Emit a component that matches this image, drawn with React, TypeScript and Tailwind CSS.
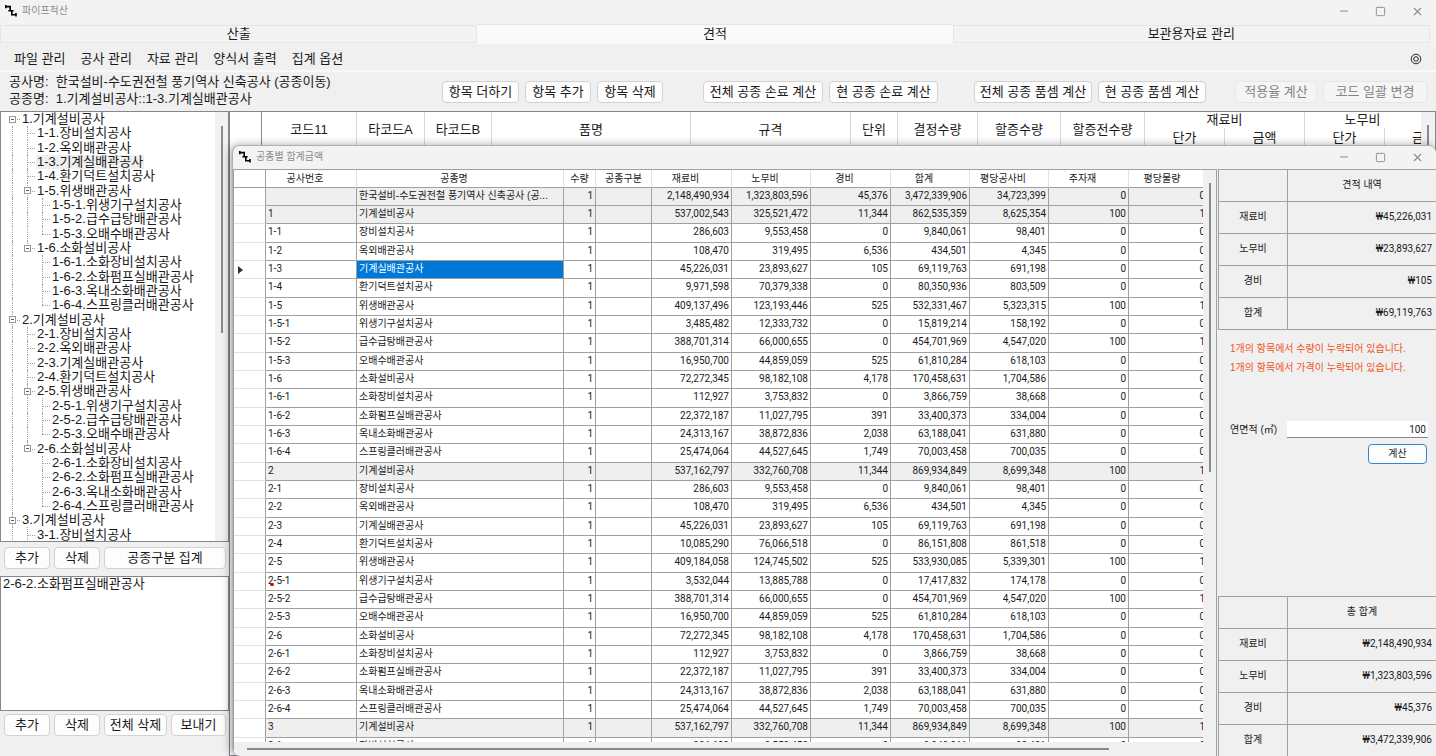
import { Minus, Square, X } from 'lucide-react';

type TreeItem = { level: number; label: string };

const tree: TreeItem[] = [
  { level: 0, label: '1.기계설비공사' },
  { level: 1, label: '1-1.장비설치공사' },
  { level: 1, label: '1-2.옥외배관공사' },
  { level: 1, label: '1-3.기계실배관공사' },
  { level: 1, label: '1-4.환기덕트설치공사' },
  { level: 1, label: '1-5.위생배관공사' },
  { level: 2, label: '1-5-1.위생기구설치공사' },
  { level: 2, label: '1-5-2.급수급탕배관공사' },
  { level: 2, label: '1-5-3.오배수배관공사' },
  { level: 1, label: '1-6.소화설비공사' },
  { level: 2, label: '1-6-1.소화장비설치공사' },
  { level: 2, label: '1-6-2.소화펌프실배관공사' },
  { level: 2, label: '1-6-3.옥내소화배관공사' },
  { level: 2, label: '1-6-4.스프링클러배관공사' },
  { level: 0, label: '2.기계설비공사' },
  { level: 1, label: '2-1.장비설치공사' },
  { level: 1, label: '2-2.옥외배관공사' },
  { level: 1, label: '2-3.기계실배관공사' },
  { level: 1, label: '2-4.환기덕트설치공사' },
  { level: 1, label: '2-5.위생배관공사' },
  { level: 2, label: '2-5-1.위생기구설치공사' },
  { level: 2, label: '2-5-2.급수급탕배관공사' },
  { level: 2, label: '2-5-3.오배수배관공사' },
  { level: 1, label: '2-6.소화설비공사' },
  { level: 2, label: '2-6-1.소화장비설치공사' },
  { level: 2, label: '2-6-2.소화펌프실배관공사' },
  { level: 2, label: '2-6-3.옥내소화배관공사' },
  { level: 2, label: '2-6-4.스프링클러배관공사' },
  { level: 0, label: '3.기계설비공사' },
  { level: 1, label: '3-1.장비설치공사' },
];

// code, name, material, labor, expense, total, per-pyeong cost, main material, per-pyeong volume
const rows: string[][] = [
  ['', '한국설비-수도권전철 풍기역사 신축공사 (공...', '2,148,490,934', '1,323,803,596', '45,376', '3,472,339,906', '34,723,399', '0', '0'],
  ['1', '기계설비공사', '537,002,543', '325,521,472', '11,344', '862,535,359', '8,625,354', '100', '1'],
  ['1-1', '장비설치공사', '286,603', '9,553,458', '0', '9,840,061', '98,401', '0', '0'],
  ['1-2', '옥외배관공사', '108,470', '319,495', '6,536', '434,501', '4,345', '0', '0'],
  ['1-3', '기계실배관공사', '45,226,031', '23,893,627', '105', '69,119,763', '691,198', '0', '0'],
  ['1-4', '환기덕트설치공사', '9,971,598', '70,379,338', '0', '80,350,936', '803,509', '0', '0'],
  ['1-5', '위생배관공사', '409,137,496', '123,193,446', '525', '532,331,467', '5,323,315', '100', '1'],
  ['1-5-1', '위생기구설치공사', '3,485,482', '12,333,732', '0', '15,819,214', '158,192', '0', '0'],
  ['1-5-2', '급수급탕배관공사', '388,701,314', '66,000,655', '0', '454,701,969', '4,547,020', '100', '1'],
  ['1-5-3', '오배수배관공사', '16,950,700', '44,859,059', '525', '61,810,284', '618,103', '0', '0'],
  ['1-6', '소화설비공사', '72,272,345', '98,182,108', '4,178', '170,458,631', '1,704,586', '0', '0'],
  ['1-6-1', '소화장비설치공사', '112,927', '3,753,832', '0', '3,866,759', '38,668', '0', '0'],
  ['1-6-2', '소화펌프실배관공사', '22,372,187', '11,027,795', '391', '33,400,373', '334,004', '0', '0'],
  ['1-6-3', '옥내소화배관공사', '24,313,167', '38,872,836', '2,038', '63,188,041', '631,880', '0', '0'],
  ['1-6-4', '스프링클러배관공사', '25,474,064', '44,527,645', '1,749', '70,003,458', '700,035', '0', '0'],
  ['2', '기계설비공사', '537,162,797', '332,760,708', '11,344', '869,934,849', '8,699,348', '100', '1'],
  ['2-1', '장비설치공사', '286,603', '9,553,458', '0', '9,840,061', '98,401', '0', '0'],
  ['2-2', '옥외배관공사', '108,470', '319,495', '6,536', '434,501', '4,345', '0', '0'],
  ['2-3', '기계실배관공사', '45,226,031', '23,893,627', '105', '69,119,763', '691,198', '0', '0'],
  ['2-4', '환기덕트설치공사', '10,085,290', '76,066,518', '0', '86,151,808', '861,518', '0', '0'],
  ['2-5', '위생배관공사', '409,184,058', '124,745,502', '525', '533,930,085', '5,339,301', '100', '1'],
  ['2-5-1', '위생기구설치공사', '3,532,044', '13,885,788', '0', '17,417,832', '174,178', '0', '0'],
  ['2-5-2', '급수급탕배관공사', '388,701,314', '66,000,655', '0', '454,701,969', '4,547,020', '100', '1'],
  ['2-5-3', '오배수배관공사', '16,950,700', '44,859,059', '525', '61,810,284', '618,103', '0', '0'],
  ['2-6', '소화설비공사', '72,272,345', '98,182,108', '4,178', '170,458,631', '1,704,586', '0', '0'],
  ['2-6-1', '소화장비설치공사', '112,927', '3,753,832', '0', '3,866,759', '38,668', '0', '0'],
  ['2-6-2', '소화펌프실배관공사', '22,372,187', '11,027,795', '391', '33,400,373', '334,004', '0', '0'],
  ['2-6-3', '옥내소화배관공사', '24,313,167', '38,872,836', '2,038', '63,188,041', '631,880', '0', '0'],
  ['2-6-4', '스프링클러배관공사', '25,474,064', '44,527,645', '1,749', '70,003,458', '700,035', '0', '0'],
  ['3', '기계설비공사', '537,162,797', '332,760,708', '11,344', '869,934,849', '8,699,348', '100', '1'],
  ['3-1', '장비설치공사', '286,603', '9,553,458', '0', '9,840,061', '98,401', '0', '0'],
];

const estimate = [
  ['재료비', '₩45,226,031'],
  ['노무비', '₩23,893,627'],
  ['경비', '₩105'],
  ['합계', '₩69,119,763'],
];

const grandTotal = [
  ['재료비', '₩2,148,490,934'],
  ['노무비', '₩1,323,803,596'],
  ['경비', '₩45,376'],
  ['합계', '₩3,472,339,906'],
];

const korean = "font-['Liberation_Sans','Noto_Sans_CJK_KR',sans-serif]";
const numeric = "font-['Roboto','Noto_Sans_CJK_KR',sans-serif]";

function Logo() {
  return (
    <svg className="w-3 h-3 shrink-0" viewBox="0 0 12 12" fill="none" stroke="#000" strokeWidth="1.6">
      <path d="M.8 0v3.2M.8 1.6h4.4V6M3.4 5.8h5.2M6.8 5.8v4h4M11 8v3.6" />
    </svg>
  );
}

function WindowBar({ title, className }: { title: string; className: string }) {
  return (
    <header className={`flex items-center shrink-0 bg-[#f3f3f3] text-[10px] leading-4 text-[#8c8c8c] ${className}`}>
      <Logo />
      <span className="ml-[5px]">{title}</span>
      <div className="ml-auto flex items-center gap-[25px] text-[#8a8a8a]">
        <button type="button" aria-label="최소화"><Minus size={12} strokeWidth={2} /></button>
        <button type="button" aria-label="최대화"><Square size={11} strokeWidth={2} /></button>
        <button type="button" aria-label="닫기"><X size={13} strokeWidth={2} /></button>
      </div>
    </header>
  );
}

function PushButton({ label, className, disabled }: { label: string; className: string; disabled?: boolean }) {
  return (
    <button
      type="button"
      disabled={disabled}
      className={`h-[22px] shrink-0 rounded-[4px] border border-[#d2d2d2] bg-[#fdfdfd] text-[13px] leading-4 whitespace-nowrap disabled:border-[#e6e6e6] disabled:bg-[#f5f5f5] disabled:text-[#838383] ${className}`}
    >
      {label}
    </button>
  );
}

// whether the guide line of `level` goes on below row `index`
function continues(index: number, level: number) {
  for (const item of tree.slice(index + 1)) {
    if (item.level === level) return true;
    if (item.level < level) return false;
  }
  return level < 2;
}

function TreeRow({ item, index }: { item: TreeItem; index: number }) {
  const expandable = tree[index + 1]?.level > item.level;
  const selected = index === 3;
  return (
    <li className="flex h-[14px] nth-[3n]:h-[15px] items-center text-[13px] leading-[14px] whitespace-nowrap">
      {Array.from({ length: item.level + 1 }, (_, level) => {
        const own = level === item.level;
        const below = continues(index, level);
        return (
          <span key={level} className="relative w-[15px] self-stretch shrink-0 flex items-center">
            {(below || own) && !(own && index === 0) && (
              <span className={`absolute left-[7px] top-0 border-l border-dotted border-[#a0a0a0] ${below ? 'bottom-0' : 'bottom-1/2'}`} />
            )}
            {own && <span className="absolute left-[7px] right-0 top-1/2 border-t border-dotted border-[#a0a0a0]" />}
            {own && expandable && (
              <button type="button" aria-label="접기" className="relative ml-1 flex w-[7px] h-[7px] items-center justify-center border border-[#999] bg-white">
                <span className="w-[3px] h-px bg-[#3b5fa8]" />
              </button>
            )}
          </span>
        );
      })}
      <span className={`ml-px px-px ${selected ? 'bg-[#efefef]' : ''}`}>{item.label}</span>
    </li>
  );
}

function Sidebar() {
  return (
    <aside className="flex w-[229px] shrink-0 flex-col">
      <div className="flex h-[431px] overflow-hidden border border-[#828790] bg-white">
        <ul className="flex-1 overflow-hidden pl-1">
          {tree.map((item, index) => (
            <TreeRow key={item.label} item={item} index={index} />
          ))}
        </ul>
        <div className="w-[13px] bg-[#f1f1f1] pt-[14px]">
          <div className="mx-auto h-[207px] w-[2px] bg-[#8a8a8a]" />
        </div>
      </div>
      <div className="flex gap-1 px-1 py-[5px]">
        <PushButton label="추가" className="w-[46px]" />
        <PushButton label="삭제" className="w-[46px]" />
        <PushButton label="공종구분 집계" className="w-[122px]" />
      </div>
      <ul className="mt-[2px] h-[135px] border border-[#828790] bg-white px-[2px] text-[13px] leading-[14px]">
        <li>2-6-2.소화펌프실배관공사</li>
      </ul>
      <div className="flex gap-1 px-1 pt-[3px]">
        <PushButton label="추가" className="w-[46px]" />
        <PushButton label="삭제" className="w-[46px]" />
        <PushButton label="전체 삭제" className="w-[63px]" />
        <PushButton label="보내기" className="w-[55px]" />
      </div>
    </aside>
  );
}

function ItemGrid() {
  const th = 'border-r border-[#d9d9d9] p-0 font-normal';
  return (
    <div className="flex flex-1 min-w-0 overflow-hidden border border-[#828790] bg-white">
      <div className="flex-1 min-w-0 overflow-hidden">
        <table className="w-[1234px] table-fixed border-separate border-spacing-0 text-[13px] leading-4">
          <colgroup>
            <col className="w-[32px]" />
            <col className="w-[95px]" />
            <col className="w-[68px]" />
            <col className="w-[67px]" />
            <col className="w-[199px]" />
            <col className="w-[160px]" />
            <col className="w-[47px]" />
            <col className="w-[80px]" />
            <col className="w-[83px]" />
            <col className="w-[84px]" />
            <col className="w-[80px]" />
            <col className="w-[80px]" />
            <col className="w-[80px]" />
            <col className="w-[79px]" />
          </colgroup>
          <thead>
            <tr className="h-[15px]">
              <th rowSpan={2} className="border-r border-[#8c8c8c] p-0" />
              {['코드11', '타코드A', '타코드B', '품명', '규격', '단위', '결정수량', '할증수량', '할증전수량'].map((name) => (
                <th key={name} rowSpan={2} className={th}>{name}</th>
              ))}
              <th colSpan={2} className={th}>재료비</th>
              <th colSpan={2} className="p-0 pr-11 font-normal">노무비</th>
            </tr>
            <tr className="h-[20px]">
              <th className={th}>단가</th>
              <th className={th}>금액</th>
              <th className={th}>단가</th>
              <th className={th}>금액</th>
            </tr>
          </thead>
        </table>
      </div>
      <div className="w-[14px] bg-[#f1f1f1] pt-[13px]">
        <div className="mx-auto h-[400px] w-[2px] bg-[#8a8a8a]" />
      </div>
    </div>
  );
}

function TotalsTable() {
  const th = 'border-r border-[#e2e2e2] p-0 pr-3 font-normal';
  const td = 'border-r border-b border-[#a0a0a0] p-0 pb-[2px]';
  return (
    <table className="w-[974px] table-fixed border-separate border-spacing-0 bg-white text-[10px] leading-[14px]">
      <colgroup>
        <col className="w-[32px]" />
        <col className="w-[91px]" />
        <col className="w-[207px]" />
        <col className="w-[32px]" />
        <col className="w-[56px]" />
        <col className="w-[80px]" />
        <col className="w-[79px]" />
        <col className="w-[80px]" />
        <col className="w-[79px]" />
        <col className="w-[79px]" />
        <col className="w-[80px]" />
        <col className="w-[79px]" />
      </colgroup>
      <thead>
        <tr className="h-[18px] [&>th]:border-b [&>th]:border-b-[#a0a0a0]">
          <th className="border-r border-[#a0a0a0] p-0" />
          <th className={th}>공사번호</th>
          <th className={th}>공종명</th>
          <th className="border-r border-[#e2e2e2] p-0 font-normal">수량</th>
          <th className="border-r border-[#e2e2e2] p-0 font-normal">공종구분</th>
          <th className={th}>재료비</th>
          <th className={th}>노무비</th>
          <th className={th}>경비</th>
          <th className={th}>합계</th>
          <th className={th}>평당공사비</th>
          <th className={th}>주자재</th>
          <th className={th}>평당물량</th>
        </tr>
      </thead>
      <tbody>
        {rows.map(([code, name, ...numbers]) => {
          const selected = code === '1-3';
          const group = !code.includes('-');
          return (
            <tr key={code} className={`h-[18px] nth-[3n]:h-[19px] ${group ? 'bg-[#efefef]' : ''}`}>
              <td className="border-r border-b border-r-[#a0a0a0] border-b-[#e2e2e2] bg-white p-0">
                {selected && (
                  <svg className="ml-1 w-[5px] h-2" viewBox="0 0 5 8" fill="#333">
                    <path d="M0 0l5 4-5 4z" />
                  </svg>
                )}
              </td>
              <td className={`${td} relative pl-[2px] ${numeric}`}>
                {code}
                {code === '2-5-1' && <span className="absolute left-1 bottom-1 h-[3px] w-1 rounded-full bg-red-600" />}
              </td>
              <td className={`${td} pl-[2px] whitespace-nowrap ${selected ? 'bg-[#0078d7] text-white' : ''}`}>{name}</td>
              <td className={`${td} pr-[2px] text-right ${numeric}`}>1</td>
              <td className={td} />
              {numbers.map((value, i) => (
                <td key={i} className={`${td} pr-[2px] text-right ${numeric}`}>{value}</td>
              ))}
            </tr>
          );
        })}
      </tbody>
    </table>
  );
}

function SummaryTable({ title, items }: { title: string; items: string[][] }) {
  return (
    <table className="w-full table-fixed border-separate border-spacing-0 border-l border-t border-[#a0a0a0] text-[10px] leading-4">
      <thead>
        <tr className="h-8">
          <td className="w-[69px] border-r border-b border-[#a0a0a0] p-0" />
          <th className="border-b border-[#a0a0a0] p-0 pb-[2px] font-normal">{title}</th>
        </tr>
      </thead>
      <tbody>
        {items.map(([label, value]) => (
          <tr key={label} className="h-8">
            <th className="border-r border-b border-[#a0a0a0] p-0 pb-[2px] font-normal">{label}</th>
            <td className={`border-b border-[#a0a0a0] p-0 pr-1 pb-[2px] text-right ${numeric}`}>{value}</td>
          </tr>
        ))}
      </tbody>
    </table>
  );
}

function TotalsWindow() {
  return (
    <section className="absolute left-[232px] right-0 top-[145px] bottom-0 flex flex-col overflow-hidden rounded-t-lg rounded-bl-lg border-l border-t border-[#b0b0b0] bg-[#f0f0f0] shadow-[-2px_0_8px_rgba(0,0,0,0.35)]">
      <WindowBar title="공종별 합계금액" className="h-[23px] pl-[6px] pr-3 pb-px" />
      <div className="flex flex-1 min-h-0">
        <div className="flex flex-1 min-w-0 flex-col border-x border-t border-[#a0a0a0]">
          <div className="flex flex-1 min-h-0">
            <div className="flex-1 min-w-0 overflow-hidden">
              <TotalsTable />
            </div>
            <div className="w-[13px] pt-[13px]">
              <div className="mx-auto h-[289px] w-[2px] bg-[#8a8a8a]" />
            </div>
          </div>
          <div className="h-[14px] shrink-0 pl-[13px] pt-[6px]">
            <div className="h-[2px] w-[89%] bg-[#8a8a8a]" />
          </div>
        </div>
        <div className="flex w-[219px] shrink-0 flex-col pl-px">
          <SummaryTable title="견적 내역" items={estimate} />
          <div className="px-3 pt-[9px] text-[10px] leading-[19px] text-[#f0541e]">
            <p>1개의 항목에서 수량이 누락되어 있습니다.</p>
            <p>1개의 항목에서 가격이 누락되어 있습니다.</p>
          </div>
          <div className="mt-11 flex items-center pl-3 pr-2 text-[10px] leading-4">
            <label htmlFor="area" className="w-[57px]">연면적 (㎡)</label>
            <input
              id="area"
              defaultValue="100"
              className={`h-[17px] w-0 flex-1 border-b border-[#868686] bg-white pr-[2px] text-right ${numeric}`}
            />
          </div>
          <button type="button" className="mt-[6px] mr-[9px] h-5 w-[59px] self-end rounded-[4px] border border-[#2f86d6] bg-[#fdfdfd] text-[10px] leading-4">
            계산
          </button>
          <div className="mt-auto -mb-px">
            <SummaryTable title="총 합계" items={grandTotal} />
          </div>
        </div>
      </div>
    </section>
  );
}

export default function App() {
  return (
    <div className={`relative flex h-screen flex-col overflow-hidden bg-[#f0f0f0] text-[#1a1a1a] ${korean}`}>
      <WindowBar title="파이프적산" className="h-[24px] pl-[5px] pr-3 pb-[2px]" />

      <div role="tablist" className="flex h-5 shrink-0 bg-[#f3f3f3] pr-[6px] text-[13px] leading-4">
        <button type="button" role="tab" aria-selected="false" className="mt-px h-[18px] flex-1 border border-[#e5e5e5] bg-[#f3f3f3]">산출</button>
        <button type="button" role="tab" aria-selected="true" className="h-5 flex-1 border-t border-[#e5e5e5] bg-[#fafafa] pb-[2px]">견적</button>
        <button type="button" role="tab" aria-selected="false" className="mt-px h-[18px] flex-1 border border-[#e5e5e5] bg-[#f3f3f3]">보관용자료 관리</button>
      </div>

      <nav className="flex h-7 shrink-0 items-center gap-[15px] border-b-2 border-[#f8f8f8] px-[14px] pt-[3px] text-[13px] leading-4">
        <button type="button">파일 관리</button>
        <button type="button">공사 관리</button>
        <button type="button">자료 관리</button>
        <button type="button">양식서 출력</button>
        <button type="button">집계 옵션</button>
        <button type="button" aria-label="설정" className="ml-auto">
          <svg className="w-3 h-3" viewBox="0 0 12 12" fill="none" stroke="#222">
            <circle cx="6" cy="6" r="4.8" />
            <circle cx="6" cy="6" r="2.3" />
          </svg>
        </button>
      </nav>

      <div className="flex h-[39px] shrink-0 items-start px-[9px] text-[13px] leading-[17px]">
        <div className="w-[433px] shrink-0 pt-px whitespace-nowrap">
          <p>공사명:&nbsp; 한국설비-수도권전철 풍기역사 신축공사 (공종이동)</p>
          <p>공종명:&nbsp; 1.기계설비공사::1-3.기계실배관공사</p>
        </div>
        <div className="flex flex-1 pt-[9px]">
          <div className="flex gap-[6px]">
            <PushButton label="항목 더하기" className="w-[77px]" />
            <PushButton label="항목 추가" className="w-[66px]" />
            <PushButton label="항목 삭제" className="w-[66px]" />
          </div>
          <div className="ml-10 flex gap-[6px]">
            <PushButton label="전체 공종 손료 계산" className="w-[120px]" />
            <PushButton label="현 공종 손료 계산" className="w-[109px]" />
          </div>
          <div className="ml-9 flex gap-[6px]">
            <PushButton label="전체 공종 품셈 계산" className="w-[118px]" />
            <PushButton label="현 공종 품셈 계산" className="w-[108px]" />
          </div>
          <div className="ml-auto flex gap-[6px]">
            <PushButton label="적용율 계산" className="w-[82px]" disabled />
            <PushButton label="코드 일괄 변경" className="w-[104px]" disabled />
          </div>
        </div>
      </div>

      <main className="flex flex-1 min-h-0">
        <Sidebar />
        <ItemGrid />
      </main>

      <TotalsWindow />
    </div>
  );
}
